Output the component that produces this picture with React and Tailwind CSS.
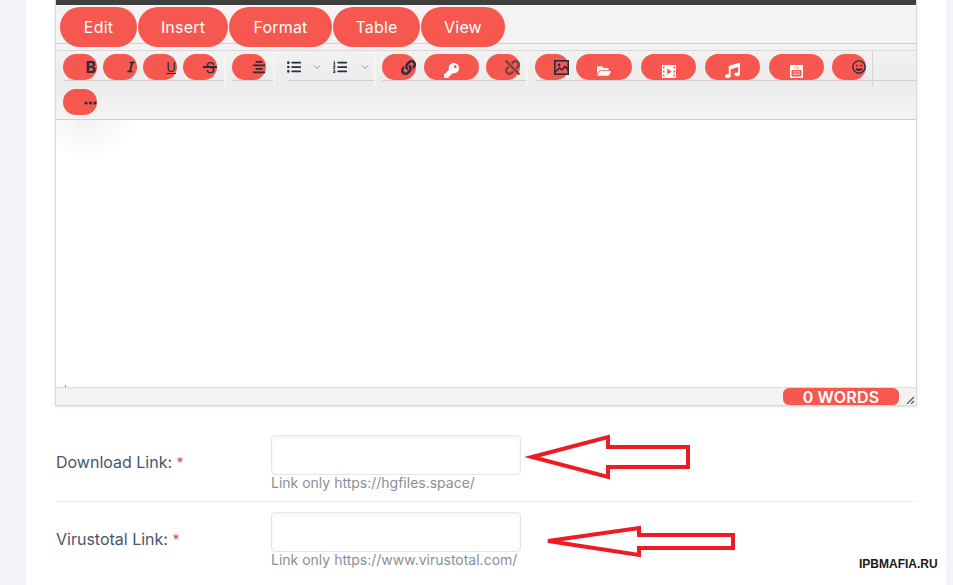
import { ChevronDown } from "lucide-react";
import {
  FaLink,
  FaUnlink,
  FaKey,
  FaFolderOpen,
  FaMusic,
  FaRegGrin,
  FaListUl,
  FaListOl,
  FaAlignCenter,
  FaItalic,
} from "react-icons/fa";

const font = { fontFamily: "Inter, 'Open Sans', sans-serif" };

const menus = [
  { label: "Edit", w: "w-[77px]" },
  { label: "Insert", w: "w-[90px]" },
  { label: "Format", w: "w-[103px]" },
  { label: "Table", w: "w-[87px]" },
  { label: "View", w: "w-[84px]" },
];

// dark icons sit flush right in the pill, white ones bottom centre
const DarkPill = ({ className = "", children }) => (
  <span className={`h-[26px] w-[34px] rounded-[13px] bg-[#f6574f] flex items-center justify-end shrink-0 ${className}`}>
    {children}
  </span>
);

const WhitePill = ({ className = "", children }) => (
  <span className={`h-[26px] w-[55px] rounded-[13px] bg-[#f6574f] flex items-end justify-center pb-0.5 text-white shrink-0 ${className}`}>
    {children}
  </span>
);

const Group = ({ className = "", sep = "border-r-2 border-r-[#f4f4f4]", children }) => (
  <div className={`h-[35px] shrink-0 ${sep} ${className}`}>
    <div className="h-[30px] pt-[3px] flex items-start border-b border-[#cfcfcf]">{children}</div>
  </div>
);

const ImageIcon = () => (
  <svg width="15" height="15" viewBox="0 0 15 15" fill="none" stroke="#222f3e" strokeWidth="1.6">
    <rect x="0.8" y="0.8" width="13.4" height="13.4" />
    <circle cx="5" cy="5" r="1.4" fill="#222f3e" stroke="none" />
    <path d="M1 12 5.5 8 8 10 11 6.5 14.5 10" />
  </svg>
);

const FilmIcon = () => (
  <svg width="14" height="13" viewBox="0 0 14 13">
    <rect width="14" height="13" fill="#fff" />
    <path d="M1 1.5h1.5v2H1zM1 5.5h1.5v2H1zM1 9.5h1.5v2H1zM11.5 1.5H13v2h-1.5zM11.5 5.5H13v2h-1.5zM11.5 9.5H13v2h-1.5z" fill="#f6574f" />
    <path d="M5.2 3.5 9.8 6.5 5.2 9.5z" fill="#f6574f" />
  </svg>
);

const TubeIcon = () => (
  <svg width="13" height="13" viewBox="0 0 13 13">
    <rect width="13" height="13" rx="1" fill="#fff" />
    <path d="M3.5 1.5h1v2h-1zM6 2h3v1.5H6z" fill="#f6a09b" />
    <rect x="1.5" y="5" width="10" height="6.5" rx="1" fill="#f6574f" />
    <path d="M3 6.5h7M3 8h7M3 9.5h7" stroke="#fff" strokeWidth="0.5" />
  </svg>
);

export default function App() {
  return (
    <div className="relative w-[953px] h-[585px] overflow-hidden bg-[#f2f4fa] px-[26px] text-[#222f3e]">
      <div className="w-[920px] h-[585px] bg-white pl-[29px] pr-[29px]">
        <div className="w-[862px] h-[406px] flex flex-col border-x border-b border-[#d9d9d9] shadow-sm">
          <div className="h-[5px] bg-[#3f3f3f] shrink-0" />
          <div className="h-[39px] shrink-0 flex gap-px pl-1 pt-0.5 border-b border-[#d0d0d0] bg-[#f3f3f3]">
            {menus.map((m) => (
              <span
                key={m.label}
                className={`h-10 ${m.w} rounded-[20px] bg-[#f6574f] text-white text-[16px] tracking-[0.2px] flex items-center justify-center shrink-0 relative`}
                style={font}
              >
                {m.label}
              </span>
            ))}
          </div>
          <div className="h-[76px] shrink-0 pt-1.5 bg-gradient-to-b from-[#f3f3f3] via-[#ececec] to-[#f4f4f4] border-b border-[#cfcfcf]">
            <div className="flex h-[35px] border-t border-[#d9d9d9]">
              <Group className="w-[170px] pl-[7px]">
                <div className="flex gap-1.5">
                  <DarkPill>
                    <span className="font-bold text-[16px] leading-none pr-px" style={font}>B</span>
                  </DarkPill>
                  <DarkPill>
                    <FaItalic size={12} />
                  </DarkPill>
                  <DarkPill>
                    <span className="underline text-[13px] leading-none pr-px" style={font}>U</span>
                  </DarkPill>
                  <DarkPill className="relative">
                    <span className="text-[15px] leading-none pr-0.5" style={font}>S</span>
                    <span className="absolute right-0 top-[12px] w-[14px] h-[2px] bg-[#222f3e]" />
                  </DarkPill>
                </div>
              </Group>
              <Group className="w-[49px] pl-[6px]">
                <DarkPill>
                  <FaAlignCenter size={14} />
                </DarkPill>
              </Group>
              <Group className="w-[101px] pl-3">
                <div className="flex items-center h-[26px]">
                  <FaListUl size={14} />
                  <ChevronDown size={12} className="text-[#9aa0a6] ml-2.5" />
                  <FaListOl size={14} className="ml-[10px]" />
                  <ChevronDown size={12} className="text-[#9aa0a6] ml-3" />
                </div>
              </Group>
              <Group className="w-[152px] pl-1.5">
                <DarkPill>
                  <FaLink size={15} />
                </DarkPill>
                <WhitePill className="ml-2">
                  <FaKey size={15} />
                </WhitePill>
                <DarkPill className="ml-[7px]">
                  <FaUnlink size={15} className="text-[#7c3f45]" />
                </DarkPill>
              </Group>
              <Group className="w-[345px] pl-[7px]" sep="border-r border-r-[#d4d4d4]">
                <DarkPill>
                  <ImageIcon />
                </DarkPill>
                <WhitePill className="ml-[7px] w-[56px]">
                  <FaFolderOpen size={14} />
                </WhitePill>
                <WhitePill className="ml-[9px]">
                  <FilmIcon />
                </WhitePill>
                <WhitePill className="ml-[9px]">
                  <FaMusic size={15} />
                </WhitePill>
                <WhitePill className="ml-[9px]">
                  <TubeIcon />
                </WhitePill>
                <DarkPill className="ml-2">
                  <FaRegGrin size={14} />
                </DarkPill>
              </Group>
              <Group className="flex-1" sep="" />
            </div>
            <div className="pl-[7px] pt-[4px]">
              <DarkPill>
                <svg width="13" height="4" viewBox="0 0 13 4" className="mt-[2px]">
                  <circle cx="2" cy="2" r="1.6" fill="#222f3e" />
                  <circle cx="6.5" cy="2" r="1.6" fill="#222f3e" />
                  <circle cx="11" cy="2" r="1.6" fill="#222f3e" />
                </svg>
              </DarkPill>
            </div>
          </div>
          <div className="relative flex-1 bg-white bg-[radial-gradient(ellipse_50px_38px_at_30px_0px,#f2f2f2,#ffffff)]">
            <span className="absolute left-[9px] bottom-0 w-px h-[2px] bg-[#8a8a8a]" />
          </div>
          <div className="relative h-[18px] shrink-0 flex justify-end items-stretch bg-[#f3f3f3] border-t border-[#dcdcdc]">
            <span
              className="w-[116px] bg-[#f6574f] text-white text-[16px] tracking-[0.2px] font-semibold rounded-[6px] flex items-center justify-center mr-[17px]"
              style={font}
            >
              0 WORDS
            </span>
            <svg width="9" height="8" viewBox="0 0 9 8" className="absolute right-[1px] bottom-[1px]" stroke="#555" strokeWidth="1.2">
              <path d="M1 8 8 1M5 8 8 5" />
            </svg>
          </div>
        </div>

        <div className="mt-[29px] flex items-start pl-px">
          <span className="w-[215px] pt-[15px] text-[16px] text-[#4a5468]" style={font}>
            Download Link: <span className="text-[#e8453c] text-sm">*</span>
          </span>
          <div>
            <div className="w-[250px] h-10 rounded border border-[#e6e6e6] shadow-inner" />
            <p className="text-[14px] text-[#8a8f98] leading-[14px] mt-px" style={font}>
              Link only https://hgfiles.space/
            </p>
          </div>
        </div>
        <div className="border-t border-dotted border-[#d9d9d9] mt-[11px] mx-px" />
        <div className="mt-[10px] flex items-start pl-px">
          <span className="w-[215px] pt-[15px] text-[16px] text-[#4a5468]" style={font}>
            Virustotal Link: <span className="text-[#e8453c] text-sm">*</span>
          </span>
          <div>
            <div className="w-[250px] h-10 rounded border border-[#e6e6e6] shadow-inner" />
            <p className="text-[14px] text-[#8a8f98] leading-[14px] mt-px" style={font}>
              Link only https://www.virustotal.com/
            </p>
          </div>
        </div>
      </div>
      <svg className="absolute left-0 top-0 pointer-events-none" width="953" height="585" fill="none" stroke="#ed1c24" strokeWidth="4">
        <path d="M532 457 L608 437 L608 447 L688 447 L688 467 L608 467 L608 477 Z" />
        <path d="M548 541 L639 528 L639 535 L733 535 L733 548 L639 548 L639 555 Z" />
      </svg>
      <span className="absolute left-[859px] top-[555px] text-[12px] font-bold text-[#1a1a1a]" style={{ fontFamily: "'Liberation Sans', sans-serif" }}>
        IPBMAFIA.RU
      </span>
    </div>
  );
}
